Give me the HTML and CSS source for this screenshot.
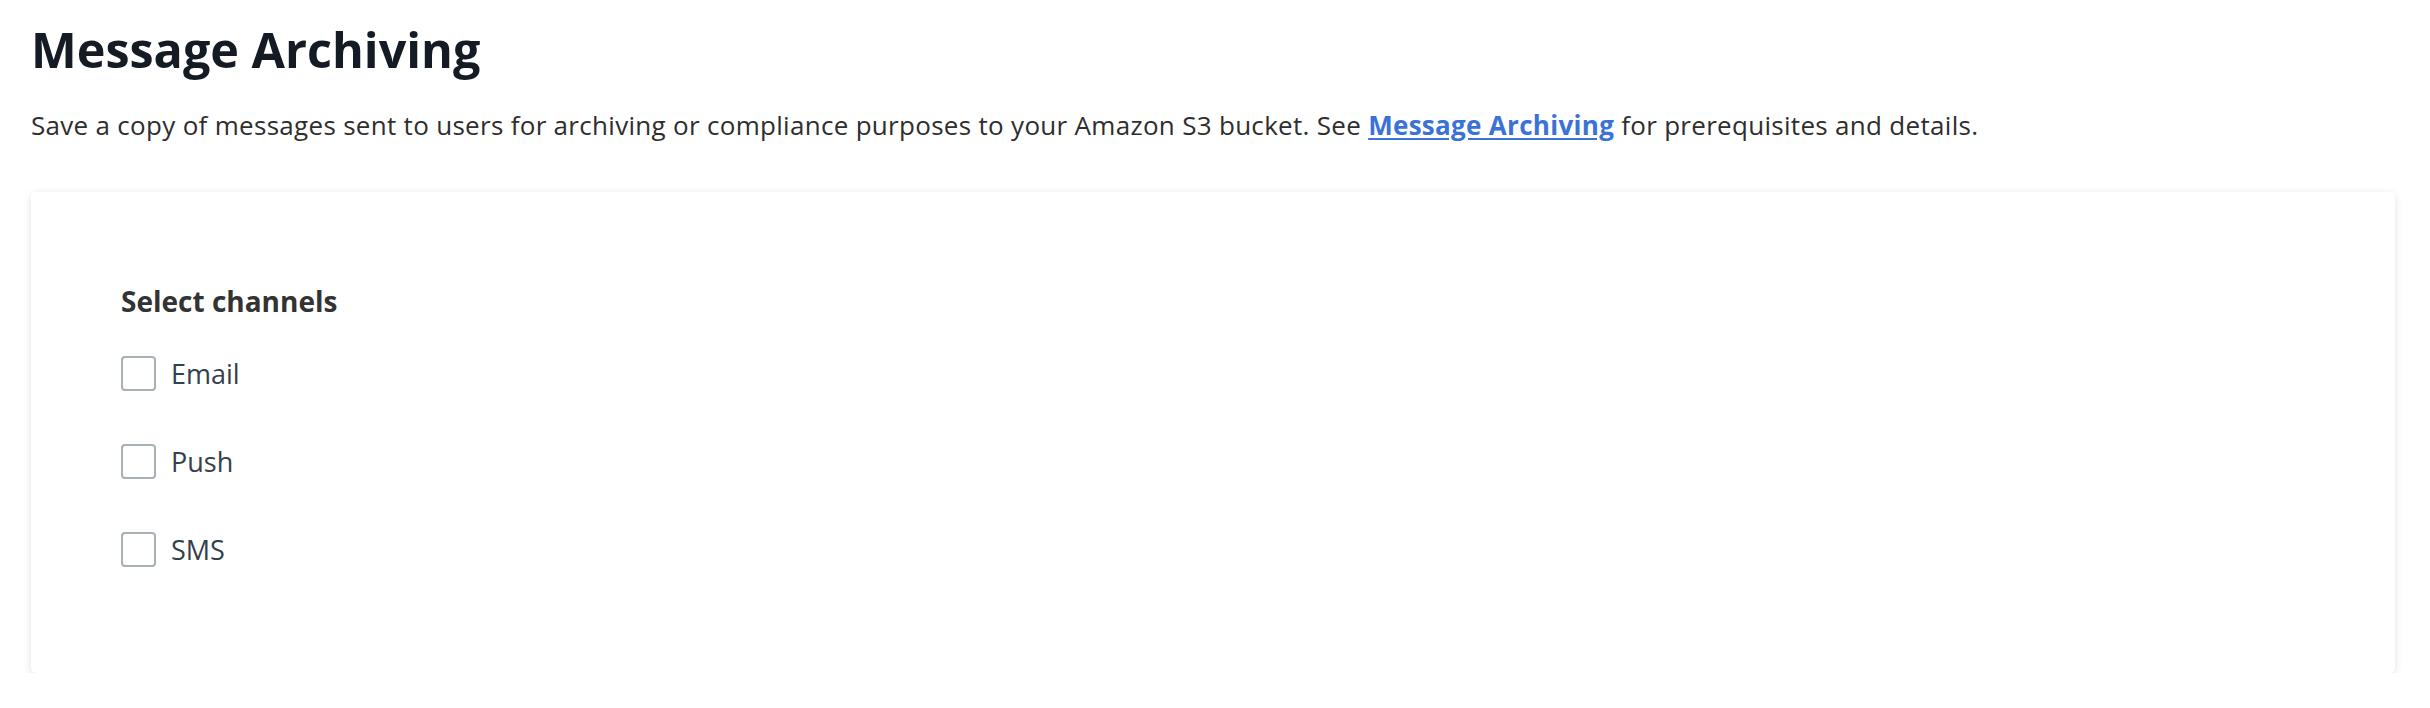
FILE: index.html
```html
<!DOCTYPE html>
<html lang="en">
<head>
  <meta charset="UTF-8" />
  <title>Message Archiving</title>
  <link rel="stylesheet" href="styles.css">
</head>
<body>
  <div class="page">
    <h1>Message Archiving</h1>
    <p class="intro">
      Save a copy of messages sent to users for archiving or compliance purposes to your Amazon S3 bucket. See
      <a href="#">Message Archiving</a> for prerequisites and details.
    </p>

    <div class="card">
      <div class="group-title">Select channels</div>
      <label class="check"><span class="box"></span>Email</label>
      <label class="check"><span class="box"></span>Push</label>
      <label class="check"><span class="box"></span>SMS</label>
    </div>
  </div>
</body>
</html>
```

FILE: styles.css
```css
body {
  margin: 0;
  font-family: 'Open Sans', 'Lato', sans-serif;
  background: #fff;
  color: #333;
}
.page {
  padding: 0 35px 0 31px;
}
h1 {
  font-size: 48.5px;
  font-weight: 700;
  color: #141b24;
  line-height: 60px;
  margin: 19px 0 0;
}
.intro {
  font-size: 26px;
  letter-spacing: 0.3px;
  line-height: 34px;
  color: #2e2e2e;
  margin: 29px 0 0;
}
.intro a {
  color: #3a72d8;
  font-weight: 700;
  text-decoration: underline;
  text-underline-offset: 3px;
}
.card {
  margin-top: 50px;
  background: #fff;
  border-radius: 5px;
  box-shadow: 0 2px 9px rgba(0,0,0,0.12);
  padding: 92px 90px 106px;
  display: flex;
  flex-direction: column;
}
.group-title {
  font-size: 28px;
  font-weight: 700;
  color: #333;
  line-height: 34px;
  margin-bottom: 38px;
}
.check {
  display: flex;
  align-items: center;
  gap: 15px;
  font-size: 27px;
  color: #33404d;
  height: 35px;
  margin-bottom: 53px;
}
.check:last-child {
  margin-bottom: 0;
}
.box {
  width: 31px;
  height: 31px;
  border: 2px solid #a7b1b6;
  border-radius: 4px;
  background: #fff;
}
```
